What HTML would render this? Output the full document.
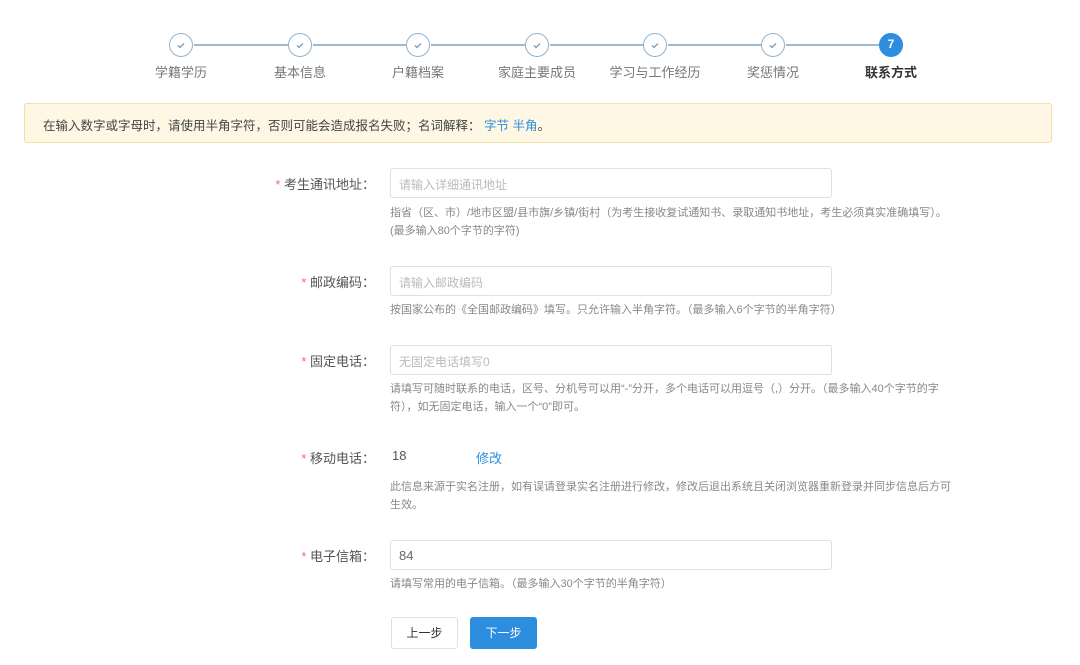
<!DOCTYPE html>
<html><head><meta charset="utf-8"><style>
*{margin:0;padding:0;box-sizing:border-box}
body{width:1080px;height:665px;background:#fff;font-family:"Liberation Sans","Noto Sans CJK SC",sans-serif;position:relative;overflow:hidden;color:#606266}
.a{position:absolute}
.c{position:absolute;width:24px;height:24px;border:1.5px solid #8fb3cf;border-radius:50%;top:33px;background:#fff}
.c svg{position:absolute;left:5px;top:5px}
.ln{position:absolute;top:44px;height:1.5px;background:#9fbad0}
.sl{position:absolute;top:62px;font-size:13px;color:#777;width:120px;text-align:center}
.lab{position:absolute;right:705px;font-size:13px;color:#555}
.lab:before{content:"* ";color:#f56c6c}
.in{position:absolute;left:390px;width:442px;height:30px;border:1px solid #dcdfe6;border-radius:3px;font-size:12px;color:#bbb;padding:7px 8px}
.h{position:absolute;left:390px;font-size:11px;color:#888;line-height:17.5px;white-space:nowrap}
</style></head><body>
<div class="ln" style="left:194px;width:94px"></div>
<div class="ln" style="left:313px;width:93px"></div>
<div class="ln" style="left:431px;width:94px"></div>
<div class="ln" style="left:550px;width:93px"></div>
<div class="ln" style="left:668px;width:93px"></div>
<div class="ln" style="left:786px;width:93px"></div>
<div class="c" style="left:169px"><svg width="12" height="12"><path d="M3 6.5l2 2 4-4" stroke="#7a9cb8" stroke-width="1.3" fill="none"/></svg></div>
<div class="c" style="left:288px"><svg width="12" height="12"><path d="M3 6.5l2 2 4-4" stroke="#7a9cb8" stroke-width="1.3" fill="none"/></svg></div>
<div class="c" style="left:406px"><svg width="12" height="12"><path d="M3 6.5l2 2 4-4" stroke="#7a9cb8" stroke-width="1.3" fill="none"/></svg></div>
<div class="c" style="left:525px"><svg width="12" height="12"><path d="M3 6.5l2 2 4-4" stroke="#7a9cb8" stroke-width="1.3" fill="none"/></svg></div>
<div class="c" style="left:643px"><svg width="12" height="12"><path d="M3 6.5l2 2 4-4" stroke="#7a9cb8" stroke-width="1.3" fill="none"/></svg></div>
<div class="c" style="left:761px"><svg width="12" height="12"><path d="M3 6.5l2 2 4-4" stroke="#7a9cb8" stroke-width="1.3" fill="none"/></svg></div>
<div class="c" style="left:879px;background:#2d8ee0;border-color:#2d8ee0;color:#fff;font-size:12px;text-align:center;line-height:21px;font-weight:bold">7</div>
<div class="sl" style="left:121px">学籍学历</div>
<div class="sl" style="left:240px">基本信息</div>
<div class="sl" style="left:358px">户籍档案</div>
<div class="sl" style="left:477px">家庭主要成员</div>
<div class="sl" style="left:595px">学习与工作经历</div>
<div class="sl" style="left:713px">奖惩情况</div>
<div class="sl" style="left:831px;color:#333;font-weight:bold">联系方式</div>
<div class="a" style="left:24px;top:103px;width:1028px;height:40px;background:#fdf7e4;border:1px solid #f3e0a8;border-radius:3px;font-size:12.5px;color:#444;padding:11px 18px">在输入数字或字母时，请使用半角字符，否则可能会造成报名失败；名词解释： <span style="color:#2d8ee0">字节 半角</span>。</div>
<div class="lab" style="top:174px">考生通讯地址：</div>
<div class="in" style="top:168px">请输入详细通讯地址</div>
<div class="h" style="top:205px">指省（区、市）/地市区盟/县市旗/乡镇/街村（为考生接收复试通知书、录取通知书地址，考生必须真实准确填写）。<br>(最多输入80个字节的字符)</div>
<div class="lab" style="top:272px">邮政编码：</div>
<div class="in" style="top:266px">请输入邮政编码</div>
<div class="h" style="top:302px">按国家公布的《全国邮政编码》填写。只允许输入半角字符。（最多输入6个字节的半角字符）</div>
<div class="lab" style="top:351px">固定电话：</div>
<div class="in" style="top:345px">无固定电话填写0</div>
<div class="h" style="top:381px">请填写可随时联系的电话，区号、分机号可以用“-”分开，多个电话可以用逗号（,）分开。（最多输入40个字节的字<br>符），如无固定电话，输入一个“0”即可。</div>
<div class="lab" style="top:448px">移动电话：</div>
<div class="a" style="left:392px;top:448px;font-size:13px;color:#555">18</div>
<div class="a" style="left:476px;top:448px;font-size:13px;color:#2d8ee0">修改</div>
<div class="h" style="top:479px">此信息来源于实名注册，如有误请登录实名注册进行修改，修改后退出系统且关闭浏览器重新登录并同步信息后方可<br>生效。</div>
<div class="lab" style="top:546px">电子信箱：</div>
<div class="in" style="top:540px;color:#666;font-size:13px">84</div>
<div class="h" style="top:576px">请填写常用的电子信箱。（最多输入30个字节的半角字符）</div>
<div class="a" style="left:391px;top:617px;width:67px;height:32px;border:1px solid #dcdfe6;border-radius:3px;font-size:12px;color:#333;text-align:center;line-height:30px">上一步</div>
<div class="a" style="left:470px;top:617px;width:67px;height:32px;background:#2d8ee0;border-radius:3px;font-size:12px;color:#fff;text-align:center;line-height:32px">下一步</div>
</body></html>
